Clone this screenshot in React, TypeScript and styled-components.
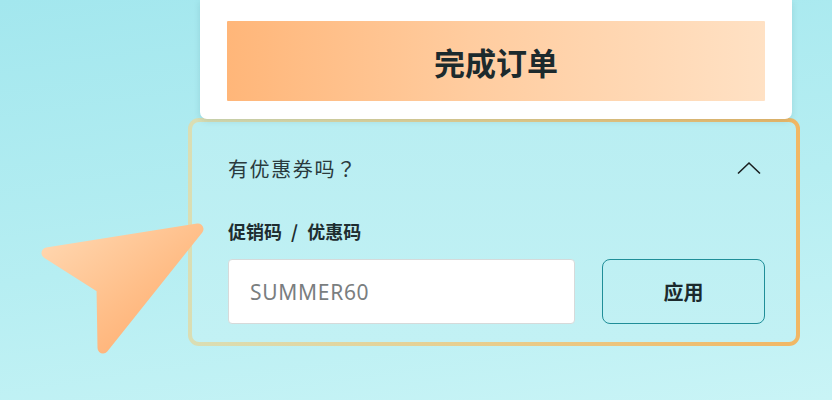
import React from "react";
import styled, { createGlobalStyle } from "styled-components";

const GlobalStyle = createGlobalStyle`
  html, body {
    margin: 0;
    padding: 0;
  }
  body {
    width: 832px;
    height: 400px;
    overflow: hidden;
    font-family: "Noto Sans", "Noto Sans CJK SC", sans-serif;
    color: #1e2d30;
  }
`;

const Page = styled.div`
  position: relative;
  width: 832px;
  height: 400px;
  box-sizing: border-box;
  padding-left: 188px;
  background: linear-gradient(172deg, #a3e7ee 0%, #b6eef2 55%, #c9f4f6 100%);
  overflow: hidden;
`;

const Column = styled.div`
  width: 612px;
  display: flex;
  flex-direction: column;
`;

const Card = styled.div`
  position: relative;
  z-index: 2;
  margin: 0 8px 0 12px;
  padding: 21px 27px 18px;
  background: #ffffff;
  border-radius: 0 0 7px 7px;
  box-shadow: 0 2px 6px rgba(60, 120, 130, 0.18);
`;

const FinishButton = styled.button`
  width: 100%;
  height: 80px;
  border: none;
  border-radius: 1px;
  background: linear-gradient(90deg, #ffb679 0%, #ffcc9f 45%, #ffe1c4 100%);
  font-family: "Noto Sans CJK SC", sans-serif;
  font-size: 31px;
  font-weight: 700;
  color: #1c2a2d;
`;

const Panel = styled.section`
  position: relative;
  z-index: 1;
  margin-top: -1px;
  height: 228px;
  box-sizing: border-box;
  padding: 29px 31px 18px 36px;
  border: 4px solid transparent;
  border-radius: 11px;
  background:
    linear-gradient(180deg, #b9eef2, #c2f1f4) padding-box,
    linear-gradient(90deg, #dadeb4 0%, #e8cd8c 50%, #f1b764 100%) border-box;
  display: flex;
  flex-direction: column;
`;

const Header = styled.div`
  height: 34px;
  display: flex;
  align-items: center;
  justify-content: space-between;
`;

const Question = styled.span`
  font-family: "Noto Sans CJK TC", "Noto Sans CJK SC", sans-serif;
  font-size: 20px;
  color: #2a3a3d;
  letter-spacing: 1.6px;
`;

const Chevron = styled.svg`
  margin-right: 4px;
`;

const Label = styled.div`
  margin-top: 35px;
  line-height: 22px;
  font-family: "Noto Sans CJK SC", sans-serif;
  font-size: 18px;
  font-weight: 700;
  word-spacing: 5px;
  color: #1e2d30;
`;

const FormRow = styled.div`
  margin-top: 17px;
  display: flex;
  gap: 27px;
`;

const CodeInput = styled.input`
  width: 347px;
  height: 65px;
  box-sizing: border-box;
  padding: 0 21px;
  border: 1px solid #d6dada;
  border-radius: 4px;
  background: #ffffff;
  font-family: "Noto Sans", sans-serif;
  font-size: 21px;
  letter-spacing: 0.7px;
  color: #2a3a3d;
  outline: none;

  &::placeholder {
    color: #7a7e7f;
  }
`;

const ApplyButton = styled.button`
  width: 163px;
  height: 65px;
  box-sizing: border-box;
  border: 1.5px solid #1f8e98;
  border-radius: 8px;
  background: transparent;
  font-family: "Noto Sans CJK SC", sans-serif;
  font-size: 20px;
  font-weight: 700;
  color: #1c2a2d;
`;

const Pointer = styled.svg`
  position: absolute;
  left: 36px;
  top: 216px;
  z-index: 3;
`;

export default function App() {
  return (
    <>
      <GlobalStyle />
      <Page>
        <Column>
          <Card>
            <FinishButton>完成订单</FinishButton>
          </Card>
          <Panel>
            <Header>
              <Question>有优惠券吗？</Question>
              <Chevron width="24" height="14" viewBox="0 0 24 14" fill="none">
                <path d="M1 12.5 L12 2 L23 12.5" stroke="#1a1f20" strokeWidth="1.6" />
              </Chevron>
            </Header>
            <Label>促销码 / 优惠码</Label>
            <FormRow>
              <CodeInput placeholder="SUMMER60" />
              <ApplyButton>应用</ApplyButton>
            </FormRow>
          </Panel>
        </Column>
        <Pointer width="176" height="146" viewBox="0 0 176 146">
          <defs>
            <linearGradient id="ptr" x1="0" y1="0" x2="1" y2="1">
              <stop offset="0" stopColor="#ffd8b2" />
              <stop offset="0.55" stopColor="#ffbe88" />
              <stop offset="1" stopColor="#ffa96a" />
            </linearGradient>
          </defs>
          <polygon
            points="162,13 11,37 66,72 67,132"
            fill="url(#ptr)"
            stroke="url(#ptr)"
            strokeWidth="11"
            strokeLinejoin="round"
          />
        </Pointer>
      </Page>
    </>
  );
}
